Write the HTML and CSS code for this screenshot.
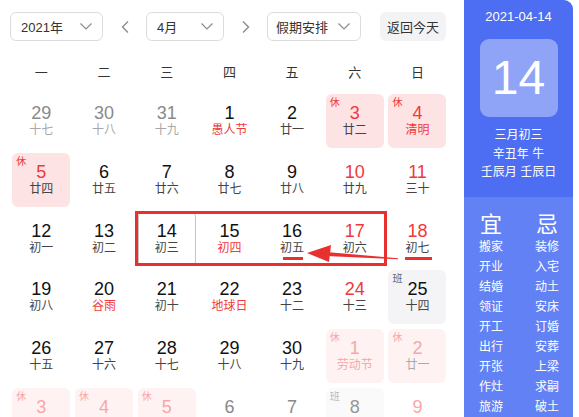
FILE: index.html
```html
<!DOCTYPE html>
<html lang="zh">
<head>
<meta charset="utf-8">
<link rel="stylesheet" href="styles.css">
</head>
<body>
<div class="page">
  <div class="cal">
    <div class="toolbar">
      <div class="select sel-year"><span>2021年</span><svg class="chev" viewBox="0 0 12 7"><path d="M0.5 0.5 L6 6 L11.5 0.5"/></svg></div>
      <div class="nav"><svg class="arr" viewBox="0 0 8 12"><path d="M7 0.5 L1.5 6 L7 11.5"/></svg></div>
      <div class="select sel-month"><span>4月</span><svg class="chev" viewBox="0 0 12 7"><path d="M0.5 0.5 L6 6 L11.5 0.5"/></svg></div>
      <div class="nav"><svg class="arr" viewBox="0 0 8 12"><path d="M1 0.5 L6.5 6 L1 11.5"/></svg></div>
      <div class="select sel-hol"><span>假期安排</span><svg class="chev" viewBox="0 0 12 7"><path d="M0.5 0.5 L6 6 L11.5 0.5"/></svg></div>
      <div class="btn-today">返回今天</div>
    </div>
    <div class="weekdays">
      <span>一</span><span>二</span><span>三</span><span>四</span><span>五</span><span>六</span><span>日</span>
    </div>
    <div class="grid">
      <div class="cell other"><b>29</b><i>十七</i></div>
      <div class="cell other"><b>30</b><i>十八</i></div>
      <div class="cell other"><b>31</b><i>十九</i></div>
      <div class="cell"><b>1</b><i class="fest">愚人节</i></div>
      <div class="cell"><b>2</b><i>廿一</i></div>
      <div class="cell rest"><em>休</em><b>3</b><i>廿二</i></div>
      <div class="cell rest"><em>休</em><b>4</b><i class="fest">清明</i></div>

      <div class="cell rest"><em>休</em><b>5</b><i>廿四</i></div>
      <div class="cell"><b>6</b><i>廿五</i></div>
      <div class="cell"><b>7</b><i>廿六</i></div>
      <div class="cell"><b>8</b><i>廿七</i></div>
      <div class="cell"><b>9</b><i>廿八</i></div>
      <div class="cell wkend"><b>10</b><i>廿九</i></div>
      <div class="cell wkend"><b>11</b><i>三十</i></div>

      <div class="cell"><b>12</b><i>初一</i></div>
      <div class="cell"><b>13</b><i>初二</i></div>
      <div class="cell selected"><b>14</b><i>初三</i></div>
      <div class="cell"><b>15</b><i class="fest">初四</i></div>
      <div class="cell"><b>16</b><i>初五</i></div>
      <div class="cell wkend"><b>17</b><i>初六</i></div>
      <div class="cell wkend"><b>18</b><i>初七</i></div>

      <div class="cell"><b>19</b><i>初八</i></div>
      <div class="cell"><b>20</b><i class="fest">谷雨</i></div>
      <div class="cell"><b>21</b><i>初十</i></div>
      <div class="cell"><b>22</b><i class="fest">地球日</i></div>
      <div class="cell"><b>23</b><i>十二</i></div>
      <div class="cell wkend"><b>24</b><i>十三</i></div>
      <div class="cell work"><em>班</em><b>25</b><i>十四</i></div>

      <div class="cell"><b>26</b><i>十五</i></div>
      <div class="cell"><b>27</b><i>十六</i></div>
      <div class="cell"><b>28</b><i>十七</i></div>
      <div class="cell"><b>29</b><i>十八</i></div>
      <div class="cell"><b>30</b><i>十九</i></div>
      <div class="cell rest faded"><em>休</em><b>1</b><i class="fest">劳动节</i></div>
      <div class="cell rest faded"><em>休</em><b>2</b><i>廿一</i></div>

      <div class="cell rest faded"><em>休</em><b>3</b></div>
      <div class="cell rest faded"><em>休</em><b>4</b></div>
      <div class="cell rest faded"><em>休</em><b>5</b></div>
      <div class="cell other"><b>6</b></div>
      <div class="cell other"><b>7</b></div>
      <div class="cell work faded"><em>班</em><b>8</b></div>
      <div class="cell wkend faded"><b>9</b></div>
    </div>

    <div class="mark-box"></div>
    <svg class="mark-arrow" viewBox="0 0 464 417" width="464" height="417">
      <rect x="283" y="257" width="20" height="3" fill="#e8302e"/>
      <rect x="405" y="257" width="27" height="3" fill="#e8302e"/>
      <polygon points="398,258.2 398,259.2 326,256 326,252" fill="#e8302e"/>
      <polygon points="307,253 331,245 329,262" fill="#e8302e"/>
    </svg>
  </div>

  <div class="side">
    <div class="side-top">
      <div class="side-date">2021-04-14</div>
      <div class="side-day">14</div>
      <div class="side-lunar">三月初三</div>
      <div class="side-lunar">辛丑年 牛</div>
      <div class="side-lunar">壬辰月 壬辰日</div>
    </div>
    <div class="side-bottom">
      <div class="col">
        <div class="col-head">宜</div>
        <div>搬家</div><div>开业</div><div>结婚</div><div>领证</div><div>开工</div><div>出行</div><div>开张</div><div>作灶</div><div>旅游</div>
      </div>
      <div class="col">
        <div class="col-head">忌</div>
        <div>装修</div><div>入宅</div><div>动土</div><div>安床</div><div>订婚</div><div>安葬</div><div>上梁</div><div>求嗣</div><div>破土</div>
      </div>
    </div>
  </div>
</div>
</body>
</html>
```

FILE: styles.css
```css
* { box-sizing: border-box; }
html, body {
  margin: 0;
  padding: 0;
  background: #fff;
  width: 579px;
  height: 417px;
  overflow: hidden;
  font-family: "Liberation Sans", "Noto Sans CJK SC", sans-serif;
  color: #333;
}
.page {
  display: flex;
  width: 579px;
  height: 417px;
}
.cal {
  position: relative;
  width: 464px;
  flex: none;
}
.toolbar {
  display: flex;
  align-items: center;
  margin: 12px 0 0 10px;
  height: 29px;
}
.select {
  height: 29px;
  border: 1px solid #dcdcdc;
  border-radius: 6px;
  display: flex;
  align-items: center;
  justify-content: space-between;
  padding: 0 10px 0 10px;
  font-size: 13px;
  color: #333;
}
.sel-year { width: 93px; }
.sel-month { width: 78px; }
.sel-hol { width: 94px; padding-left: 8px; }
.chev {
  width: 12px;
  height: 7px;
  fill: none;
  stroke: #8c8c8c;
  stroke-width: 1.2;
}
.nav {
  width: 43px;
  display: flex;
  justify-content: center;
  align-items: center;
}
.arr {
  width: 8px;
  height: 12px;
  fill: none;
  stroke: #8c8c8c;
  stroke-width: 1.4;
}
.btn-today {
  margin-left: 19px;
  width: 66px;
  height: 29px;
  border-radius: 6px;
  background: #f3f3f5;
  font-size: 13px;
  color: #333;
  display: flex;
  align-items: center;
  justify-content: center;
}
.weekdays {
  display: grid;
  grid-template-columns: repeat(7, 58px);
  column-gap: 4.7px;
  margin: 22px 0 0 12.35px;
  height: 20px;
  line-height: 20px;
  font-size: 13px;
  color: #333;
  text-align: center;
}
.grid {
  display: grid;
  grid-template-columns: repeat(7, 58px);
  grid-auto-rows: 54px;
  column-gap: 4.7px;
  row-gap: 4.8px;
  margin: 11px 0 0 12.35px;
}
.cell {
  position: relative;
  border-radius: 6px;
  display: flex;
  flex-direction: column;
  align-items: center;
  padding-top: 8px;
}
.cell b {
  font-weight: 400;
  font-size: 18px;
  line-height: 22px;
  color: #111;
}
.cell i {
  font-style: normal;
  font-size: 12px;
  line-height: 14px;
  margin-top: -1px;
  color: #444;
}
.cell em {
  position: absolute;
  left: 4px;
  top: 3px;
  font-style: normal;
  font-size: 10px;
  line-height: 12px;
}
.cell i.fest { color: #ee3a3a; }
.cell.other b { color: #8a8a8a; }
.cell.other i { color: #a8a8a8; }
.cell.wkend b { color: #ee3a3a; }
.cell.rest { background: #fde3e3; }
.cell.rest b { color: #ee3a3a; }
.cell.rest em { color: #ee3a3a; }
.cell.work { background: #f4f4f6; }
.cell.work em { color: #666; }
.cell.faded { opacity: 0.45; }
.cell.selected {
  border: 1px solid #c4c4c4;
  border-radius: 4px;
  padding-top: 7px;
}
.mark-box {
  position: absolute;
  left: 135px;
  top: 211px;
  width: 252px;
  height: 55px;
  border: 3px solid #e8302e;
}
.mark-arrow {
  position: absolute;
  left: 0;
  top: 0;
  pointer-events: none;
}
.side {
  width: 109px;
  flex: none;
  display: flex;
  flex-direction: column;
  color: #fff;
  border-top-right-radius: 9px;
  overflow: hidden;
}
.side-top {
  background: #4d6df3;
  height: 197px;
  display: flex;
  flex-direction: column;
  align-items: center;
  padding-top: 8px;
}
.side-date {
  font-size: 13px;
  line-height: 18px;
}
.side-day {
  margin-top: 13px;
  width: 78px;
  height: 78px;
  border-radius: 9px;
  background: #8fa4f7;
  font-size: 48px;
  line-height: 78px;
  text-align: center;
  color: #fff;
}
.side-lunar {
  font-size: 12px;
  line-height: 18.5px;
}
.side-day + .side-lunar { margin-top: 9px; }
.side-bottom {
  flex: 1;
  background: #6281f4;
  display: grid;
  grid-template-columns: 46px 46px;
  column-gap: 10px;
  padding: 15px 0 0 4px;
}
.col {
  display: flex;
  flex-direction: column;
  align-items: center;
  font-size: 12px;
  line-height: 20px;
}
.col-head {
  font-size: 22px;
  line-height: 26px;
  margin-bottom: -1px;
}
```
